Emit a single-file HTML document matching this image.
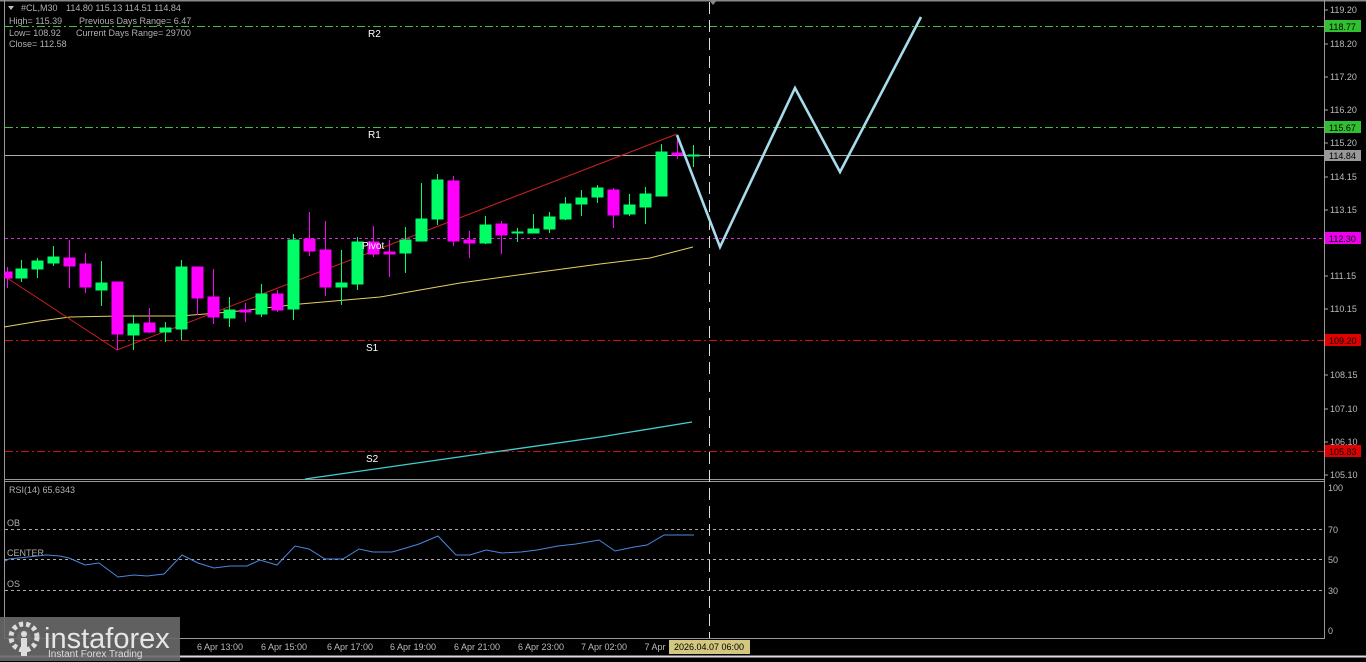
<!DOCTYPE html>
<html><head><meta charset="utf-8"><style>
html,body{margin:0;padding:0;background:#000;width:1366px;height:662px;overflow:hidden}
svg{display:block}
text{font-family:"Liberation Sans",sans-serif;white-space:pre}
</style></head><body>
<svg width="1366" height="662" viewBox="0 0 1366 662" xmlns="http://www.w3.org/2000/svg">
<rect width="1366" height="662" fill="#000"/>
<line x1="0" y1="0.5" x2="1366" y2="0.5" stroke="#888" stroke-width="2"/>
<line x1="4.5" y1="0" x2="4.5" y2="638" stroke="#999"/>
<line x1="1324.5" y1="0" x2="1324.5" y2="638" stroke="#999"/>
<line x1="4" y1="479.5" x2="1325" y2="479.5" stroke="#999"/>
<line x1="4" y1="481.5" x2="1325" y2="481.5" stroke="#999"/>
<line x1="4" y1="638.5" x2="1325" y2="638.5" stroke="#999"/>
<line x1="0" y1="656.5" x2="1366" y2="656.5" stroke="#ddd" stroke-width="2"/>
<g stroke-width="1" fill="none">
<line x1="5" y1="26.5" x2="1324" y2="26.5" stroke="#3fbf3f" stroke-dasharray="8,3,2,3"/>
<line x1="5" y1="127.5" x2="1324" y2="127.5" stroke="#3fbf3f" stroke-dasharray="8,3,2,3"/>
<line x1="5" y1="155.5" x2="1324" y2="155.5" stroke="#aaa"/>
<line x1="5" y1="238.5" x2="1324" y2="238.5" stroke="#d030d0" stroke-dasharray="3,3"/>
<line x1="5" y1="340.5" x2="1324" y2="340.5" stroke="#d01010" stroke-dasharray="8,3,2,3"/>
<line x1="5" y1="451.5" x2="1324" y2="451.5" stroke="#d01010" stroke-dasharray="8,3,2,3"/>
<line x1="5" y1="529.5" x2="1324" y2="529.5" stroke="#aaa" stroke-dasharray="3,3"/>
<line x1="5" y1="559.5" x2="1324" y2="559.5" stroke="#aaa" stroke-dasharray="3,3"/>
<line x1="5" y1="590.5" x2="1324" y2="590.5" stroke="#aaa" stroke-dasharray="3,3"/>
<line x1="709.5" y1="2" x2="709.5" y2="638" stroke="#ddd" stroke-dasharray="12,6"/>
</g>
<polygon points="709,0 717,0 713,5" fill="#888"/>
<polyline points="4,327 40,321 70,317 120,316 180,316 230,312 300,304 380,297 420,290 460,283 540,272 600,264 650,258 693,247" fill="none" stroke="#e8d060" stroke-width="1"/>
<polyline points="305,479 480,454 600,437 692,422" fill="none" stroke="#40d0d0" stroke-width="1.3"/>
<polyline points="4,276 117,350 677,134" fill="none" stroke="#d02020" stroke-width="1"/>
<g>
<g stroke="#ff00ff" fill="#ff00ff">
<line x1="7.5" y1="267" x2="7.5" y2="288"/><rect x="5" y="272" width="7" height="6"/>
<line x1="69.5" y1="240" x2="69.5" y2="288"/><rect x="64" y="258" width="11" height="8"/>
<line x1="85.5" y1="253" x2="85.5" y2="293"/><rect x="80" y="264" width="11" height="23"/>
<line x1="117.5" y1="282" x2="117.5" y2="350"/><rect x="112" y="282" width="11" height="52"/>
<line x1="149.5" y1="308" x2="149.5" y2="333"/><rect x="144" y="323" width="11" height="9"/>
<line x1="197.5" y1="267" x2="197.5" y2="315"/><rect x="192" y="267" width="11" height="31"/>
<line x1="213.5" y1="269" x2="213.5" y2="324"/><rect x="208" y="297" width="11" height="20"/>
<line x1="245.5" y1="303" x2="245.5" y2="322"/><rect x="240" y="310" width="11" height="2"/>
<line x1="277.5" y1="290" x2="277.5" y2="312"/><rect x="272" y="294" width="11" height="16"/>
<line x1="309.5" y1="212" x2="309.5" y2="256"/><rect x="304" y="239" width="11" height="12"/>
<line x1="325.5" y1="221" x2="325.5" y2="296"/><rect x="320" y="250" width="11" height="37"/>
<line x1="373.5" y1="226" x2="373.5" y2="257"/><rect x="368" y="242" width="11" height="12"/>
<line x1="389.5" y1="240" x2="389.5" y2="277"/><rect x="384" y="252" width="11" height="2"/>
<line x1="453.5" y1="176" x2="453.5" y2="246"/><rect x="448" y="181" width="11" height="60"/>
<line x1="469.5" y1="231" x2="469.5" y2="258"/><rect x="464" y="240" width="11" height="3"/>
<line x1="501.5" y1="221" x2="501.5" y2="254"/><rect x="496" y="224" width="11" height="11"/>
<line x1="613.5" y1="188" x2="613.5" y2="228"/><rect x="608" y="190" width="11" height="25"/>
<line x1="677.5" y1="135" x2="677.5" y2="159"/><rect x="672" y="153" width="11" height="2"/>
</g>
<g stroke="#00ff66" fill="#00ff66">
<line x1="21.5" y1="260" x2="21.5" y2="282"/><rect x="16" y="269" width="11" height="9"/>
<line x1="37.5" y1="258" x2="37.5" y2="278"/><rect x="32" y="261" width="11" height="8"/>
<line x1="53.5" y1="246" x2="53.5" y2="266"/><rect x="48" y="257" width="11" height="6"/>
<line x1="101.5" y1="261" x2="101.5" y2="306"/><rect x="96" y="283" width="11" height="7"/>
<line x1="133.5" y1="315" x2="133.5" y2="350"/><rect x="128" y="324" width="11" height="11"/>
<line x1="165.5" y1="322" x2="165.5" y2="342"/><rect x="160" y="328" width="11" height="4"/>
<line x1="181.5" y1="260" x2="181.5" y2="340"/><rect x="176" y="267" width="11" height="62"/>
<line x1="229.5" y1="297" x2="229.5" y2="327"/><rect x="224" y="310" width="11" height="8"/>
<line x1="261.5" y1="284" x2="261.5" y2="317"/><rect x="256" y="294" width="11" height="20"/>
<line x1="293.5" y1="234" x2="293.5" y2="320"/><rect x="288" y="240" width="11" height="69"/>
<line x1="341.5" y1="250" x2="341.5" y2="305"/><rect x="336" y="283" width="11" height="4"/>
<line x1="357.5" y1="237" x2="357.5" y2="290"/><rect x="352" y="242" width="11" height="42"/>
<line x1="405.5" y1="227" x2="405.5" y2="273"/><rect x="400" y="240" width="11" height="13"/>
<line x1="421.5" y1="183" x2="421.5" y2="241"/><rect x="416" y="219" width="11" height="22"/>
<line x1="437.5" y1="174" x2="437.5" y2="225"/><rect x="432" y="180" width="11" height="39"/>
<line x1="485.5" y1="216" x2="485.5" y2="244"/><rect x="480" y="225" width="11" height="18"/>
<line x1="517.5" y1="228" x2="517.5" y2="242"/><rect x="512" y="232" width="11" height="1"/>
<line x1="533.5" y1="214" x2="533.5" y2="233"/><rect x="528" y="229" width="11" height="4"/>
<line x1="549.5" y1="212" x2="549.5" y2="233"/><rect x="544" y="217" width="11" height="12"/>
<line x1="565.5" y1="197" x2="565.5" y2="220"/><rect x="560" y="204" width="11" height="15"/>
<line x1="581.5" y1="190" x2="581.5" y2="216"/><rect x="576" y="198" width="11" height="6"/>
<line x1="597.5" y1="185" x2="597.5" y2="203"/><rect x="592" y="188" width="11" height="9"/>
<line x1="629.5" y1="194" x2="629.5" y2="216"/><rect x="624" y="205" width="11" height="9"/>
<line x1="645.5" y1="187" x2="645.5" y2="224"/><rect x="640" y="194" width="11" height="13"/>
<line x1="661.5" y1="144" x2="661.5" y2="196"/><rect x="656" y="152" width="11" height="44"/>
<line x1="693.5" y1="145" x2="693.5" y2="167"/><rect x="688" y="155" width="11" height="1"/>
</g>
</g>
<polyline points="677,135 720,247 795,88 840,172 921,17" fill="none" stroke="#a8dcec" stroke-width="2.6"/>
<g fill="#fff" font-size="10">
<text x="368" y="37">R2</text>
<text x="368" y="138">R1</text>
<text x="362" y="249">Pivot</text>
<text x="366" y="351">S1</text>
<text x="366" y="462">S2</text>
</g>
<g fill="#b0b0b0" font-size="9">
<polygon points="8,6 14,6 11,10" fill="#bbb"/>
<text x="21" y="11">#CL,M30</text><text x="66" y="11">114.80 115.13 114.51 114.84</text>
<text x="9" y="24">High= 115.39</text><text x="79" y="24">Previous Days Range= 6.47</text>
<text x="9" y="36">Low= 108.92</text><text x="76" y="36">Current Days Range= 29700</text>
<text x="9" y="47">Close= 112.58</text>
<text x="9" y="493">RSI(14) 65.6343</text>
<text x="7" y="526">OB</text>
<text x="7" y="556">CENTER</text>
<text x="7" y="587">OS</text>
</g>
<polyline points="5,561 9,559 28,557 46,555 60,556 69,558 85,565 99,563 118,577 134,575 147,576 164,574 182,555 198,563 214,568 230,566 247,566 260,560 277,565 295,546 309,549 325,559 343,559 359,549 373,552 392,552 406,548 419,544 438,536 456,555 470,555 486,550 502,553 521,552 537,550 558,546 576,544 599,540 615,551 634,547 647,545 664,535 680,535 694,535" fill="none" stroke="#4a88e0" stroke-width="1"/>
<g stroke="#aaa">
<line x1="1324" y1="10" x2="1328" y2="10"/><line x1="1324" y1="44" x2="1328" y2="44"/><line x1="1324" y1="77" x2="1328" y2="77"/><line x1="1324" y1="110" x2="1328" y2="110"/><line x1="1324" y1="143" x2="1328" y2="143"/><line x1="1324" y1="177" x2="1328" y2="177"/><line x1="1324" y1="210" x2="1328" y2="210"/><line x1="1324" y1="243" x2="1328" y2="243"/><line x1="1324" y1="276" x2="1328" y2="276"/><line x1="1324" y1="309" x2="1328" y2="309"/><line x1="1324" y1="342" x2="1328" y2="342"/><line x1="1324" y1="375" x2="1328" y2="375"/><line x1="1324" y1="409" x2="1328" y2="409"/><line x1="1324" y1="442" x2="1328" y2="442"/><line x1="1324" y1="475" x2="1328" y2="475"/>
</g>
<g fill="#bbb" font-size="9">
<text x="1330" y="13">119.20</text>
<text x="1330" y="47">118.20</text>
<text x="1330" y="80">117.20</text>
<text x="1330" y="113">116.20</text>
<text x="1330" y="146">115.20</text>
<text x="1330" y="180">114.15</text>
<text x="1330" y="213">113.15</text>
<text x="1330" y="279">111.15</text>
<text x="1330" y="312">110.15</text>
<text x="1330" y="378">108.15</text>
<text x="1330" y="412">107.10</text>
<text x="1330" y="445">106.10</text>
<text x="1330" y="478">105.10</text>
<text x="1328" y="491">100</text>
<text x="1328" y="533">70</text>
<text x="1328" y="563">50</text>
<text x="1328" y="594">30</text>
<text x="1328" y="634">0</text>
</g>
<rect x="1325" y="20" width="36" height="12" fill="#30c030"/>
<rect x="1325" y="121" width="36" height="12" fill="#30c030"/>
<rect x="1325" y="150" width="36" height="11" fill="#999"/>
<rect x="1325" y="232" width="36" height="12" fill="#ee00ee"/>
<rect x="1325" y="334" width="36" height="12" fill="#e00000"/>
<rect x="1325" y="445" width="36" height="12" fill="#e00000"/>
<g fill="#000" font-size="9">
<text x="1329" y="30">118.77</text>
<text x="1329" y="131">115.67</text>
<text x="1329" y="159">114.84</text>
<text x="1329" y="242">112.30</text>
<text x="1329" y="344">109.20</text>
<text x="1329" y="455">105.83</text>
</g>
<g fill="#bbb" font-size="9" text-anchor="middle">
<text x="220" y="650">6 Apr 13:00</text>
<text x="284" y="650">6 Apr 15:00</text>
<text x="350" y="650">6 Apr 17:00</text>
<text x="413" y="650">6 Apr 19:00</text>
<text x="477" y="650">6 Apr 21:00</text>
<text x="541" y="650">6 Apr 23:00</text>
<text x="604" y="650">7 Apr 02:00</text>
<text x="655" y="650">7 Apr</text>
</g>
<rect x="669" y="640" width="81" height="14" fill="#d4c880"/>
<text x="709" y="650" fill="#000" font-size="9" text-anchor="middle">2026.04.07 06:00</text>
<rect x="0" y="617" width="180" height="44" fill="#6a6a6a" opacity="0.9"/>
<g fill="#ddd">
<circle cx="24" cy="637" r="13" fill="none" stroke="#ddd" stroke-width="5" stroke-dasharray="4,3"/>
<circle cx="24" cy="637" r="7" fill="#6a6a6a"/>
<circle cx="24" cy="634" r="3"/>
<rect x="21" y="638" width="6" height="18"/>
</g>
<text x="44" y="648" fill="#e6e6e6" font-size="29">instaforex</text>
<text x="48" y="657" fill="#ddd" font-size="10">Instant Forex Trading</text>
</svg>
</body></html>
